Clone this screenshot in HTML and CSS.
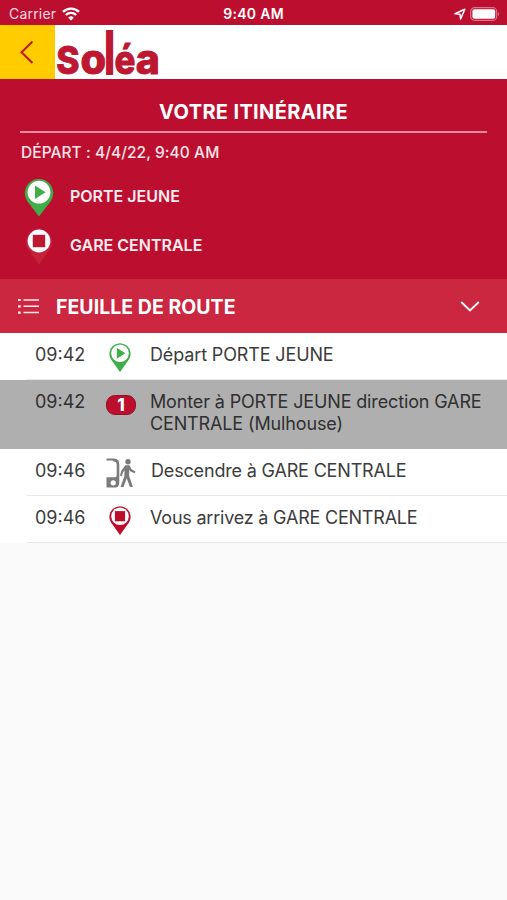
FILE: index.html
```html
<!DOCTYPE html>
<html lang="fr">
<head>
<meta charset="utf-8">
<title>Soléa</title>
<link rel="stylesheet" href="styles.css">
</head>
<body>
<div class="status">
  <div class="carrier"><span>Carrier</span>
    <svg width="18" height="14" viewBox="0 0 18 14" fill="none" stroke="#fff" stroke-width="2.4"><path d="M1 4.9a11.5 11.5 0 0 1 16 0M3.9 8a7.3 7.3 0 0 1 10.2 0"/><path d="M9 13.5L6.2 10.7a4 4 0 0 1 5.6 0z" fill="#fff" stroke="none"/></svg>
  </div>
  <div class="clock">9:40 AM</div>
  <div class="power">
    <svg width="12" height="12" viewBox="0 0 12 12" fill="none" stroke="#fff" stroke-width="1.5" stroke-linejoin="round"><path d="M1 5.8L10.8 1.2 6.6 11 6 6.2z"/></svg>
    <svg width="31" height="14" viewBox="0 0 31 14"><rect x=".7" y=".7" width="26" height="12.6" rx="3.8" fill="none" stroke="#dc7489" stroke-width="1.2"/><rect x="2.4" y="2.3" width="22.8" height="9.4" rx="2" fill="#fff"/><path d="M28 4.7q2.2 2.3 0 4.6z" fill="#dc7489"/></svg>
  </div>
</div>
<header class="brand">
  <div class="back"><svg width="16" height="26" viewBox="0 0 16 26" fill="none" stroke="#bd1731" stroke-width="2"><path d="M13.5 2.5L2.5 13.2 13.5 24"/></svg></div>
  <svg class="logo" width="110" height="54" viewBox="0 0 110 54"><text class="wordmark" transform="translate(1.2 49) scale(.86 .95)">S</text><text class="wordmark" transform="translate(25.4 49) scale(1.01 1)">o</text><text class="stem" transform="translate(49.2 49.7) scale(.86 1.46)">l</text><text class="wordmark" transform="translate(59.4 49) scale(.85 .97)">é</text><text class="wordmark" transform="translate(80.8 49) scale(1 1)">a</text></svg>
</header>
<section class="trip">
  <h1>VOTRE ITINÉRAIRE</h1>
  <p class="when">DÉPART : 4/4/22, 9:40 AM</p>
  <div class="place">
    <svg width="30" height="40" viewBox="0 0 30 40"><path d="M15 39.5L3.1 24A14.2 14.2 0 1 1 26.9 24z" fill="#3fae49"/><circle cx="15" cy="15.2" r="11.4" fill="#fff"/><path d="M11 8.5v13.4l10.6-6.7z" fill="#3fae49"/></svg>
    <span>PORTE JEUNE</span>
  </div>
  <div class="place">
    <svg width="30" height="40" viewBox="0 0 30 40"><path d="M15 38.5L4 23A13 13 0 1 1 26 23z" fill="#c5213b"/><circle cx="15" cy="15" r="11.4" fill="#fff"/><rect x="8.8" y="8.8" width="12.4" height="12.4" fill="#bd1731"/></svg>
    <span>GARE CENTRALE</span>
  </div>
</section>
<div class="sheet">
  <svg width="22" height="18" viewBox="0 0 22 18" stroke="#ffe9ec" fill="none"><path d="M5.5 3H21M5.5 9.3H21M5.5 15.6H21" stroke-width="1.5"/><path d="M0 3h2.7M0 9.3h2.7M0 15.6h2.7" stroke-width="2.2"/></svg>
  <h2>FEUILLE DE ROUTE</h2>
  <svg width="20" height="14" viewBox="0 0 20 14" fill="none" stroke="#fff" stroke-width="1.8"><path d="M1.2 3L10 11.5 18.8 3"/></svg>
</div>
<ol class="steps">
  <li><time>09:42</time>
    <svg width="30" height="30" viewBox="0 0 30 30"><path d="M15 30L6.2 17.7A10.6 10.6 0 1 1 23.8 17.7z" fill="#3fae49"/><circle cx="15" cy="11.2" r="8.8" fill="#fff"/><path d="M11.8 5.8v11l8.6-5.5z" fill="#3fae49"/></svg>
    <span>Départ PORTE JEUNE</span></li>
  <li class="current"><time>09:42</time>
    <b class="line">1</b>
    <span>Monter à PORTE JEUNE direction GARE CENTRALE (Mulhouse)</span></li>
  <li><time>09:46</time>
    <svg width="30" height="30" viewBox="0 0 30 30" fill="#7b7b7b"><path fill-rule="evenodd" d="M.5.5H8q5.3 0 5.3 6V24q0 5.5-4 5.5H.5V19.3H9q1.7 0 1.7-2V7q0-3.4-3-3.4L6.5 2.5H.5zM7.2 22.2a2.6 2.6 0 1 0 0 5.2 2.6 2.6 0 0 0 0-5.2z"/><circle cx="22" cy="3.8" r="2.7"/><path d="M19.4 7.2h4.1l2 4.1 4 2.3-.9 1.7-4.5-2-1-1.5.1 6.2 3.7 11h-3l-3.2-8.7-3.2 8.7h-3l3.8-10.8.3-6-1.5 2-1.3 4-1.8-.6 1.4-5z"/></svg>
    <span>Descendre à GARE CENTRALE</span></li>
  <li><time>09:46</time>
    <svg width="30" height="30" viewBox="0 0 30 30"><path d="M15 30L6.2 17.7A10.6 10.6 0 1 1 23.8 17.7z" fill="#be0e2d"/><circle cx="15" cy="11.2" r="8.8" fill="#fff"/><rect x="9.9" y="6.1" width="10.2" height="10.2" fill="#be0e2d"/></svg>
    <span class="arrival">Vous arrivez à GARE CENTRALE</span></li>
</ol>
</body>
</html>
```
FILE: styles.css
```css
* { box-sizing: border-box; }
body { margin: 0; min-height: 900px; background: #fafafa; color: #3c3c3c; font-family: Inter, "Liberation Sans", sans-serif; }
svg { display: block; flex: none; }
h1, h2, p, ol { margin: 0; padding: 0; }

.status { display: grid; grid-template-columns: 1fr auto 1fr; align-items: center; height: 25px; padding: 2px 6px 0 9px; background: #bc0f2f; color: #fff; font-size: 14px; }
.carrier { display: flex; align-items: center; gap: 6px; color: #fbdce2; }
.carrier span { letter-spacing: .2px; }
.clock { margin-right: 3px; font-weight: 600; letter-spacing: .3px; }
.power { display: flex; align-items: center; justify-content: flex-end; gap: 4px; }

.brand { display: flex; height: 54px; background: #fff; }
.back { display: flex; align-items: center; justify-content: center; width: 55px; padding-right: 2px; background: #fc0; }
.logo { overflow: visible; }
.wordmark, .stem { fill: #bd1731; font-family: Inter, sans-serif; font-size: 42px; font-weight: 900; }
.wordmark { font-size: 41px; font-weight: 800; stroke: #bd1731; stroke-width: .9px; stroke-linejoin: round; }

.trip { height: 200px; padding: 18px 20px 0; background: #bc0f2f; color: #fff; }
h1 { height: 36px; border-bottom: 2px solid #f28a9f; font-size: 20px; line-height: 30px; font-weight: 650; letter-spacing: .35px; text-align: center; }
.when { padding: 9px 0 0 1px; height: 44px; font-size: 15.5px; line-height: 22px; font-weight: 500; letter-spacing: .06px; color: #ffe4e9; }
.place { display: flex; gap: 16px; height: 49px; padding-left: 4px; font-size: 16px; font-weight: 600; line-height: 39px; color: #ffecef; }

.sheet { display: flex; align-items: center; height: 54px; padding: 0 27px 0 18px; background: #cc2740; color: #fff; }
h2 { flex: 1; margin-left: 16px; padding-top: 1px; font-size: 19.5px; font-weight: 650; letter-spacing: .03px; }

.steps { list-style: none; background: #fff; font-size: 18px; line-height: 22px; }
.steps li { display: grid; grid-template-columns: 70px 45px 1fr; align-items: start; min-height: 47px; padding: 11px 10px 0 35px; background: linear-gradient(#e9e9e9, #e9e9e9) 27px 100% / 100% 1px no-repeat; }
.steps span { letter-spacing: -.14px; }
.steps .arrival { letter-spacing: -.21px; }
.steps svg { margin: -2px 0 0 0; }
.steps li:nth-child(3) svg { margin: -2px 0 0 1px; }
.steps li:nth-child(3) span { padding-left: 1px; letter-spacing: -.17px; }
.steps .current { height: 69px; background: #afafaf; color: #303030; }
.line { width: 30px; height: 20px; margin: 4px 0 0 1px; border: 1px solid #8f1028; border-radius: 9px; background: #be0e2d; color: #fff; font-size: 17px; line-height: 18px; font-weight: 800; text-align: center; }
```
